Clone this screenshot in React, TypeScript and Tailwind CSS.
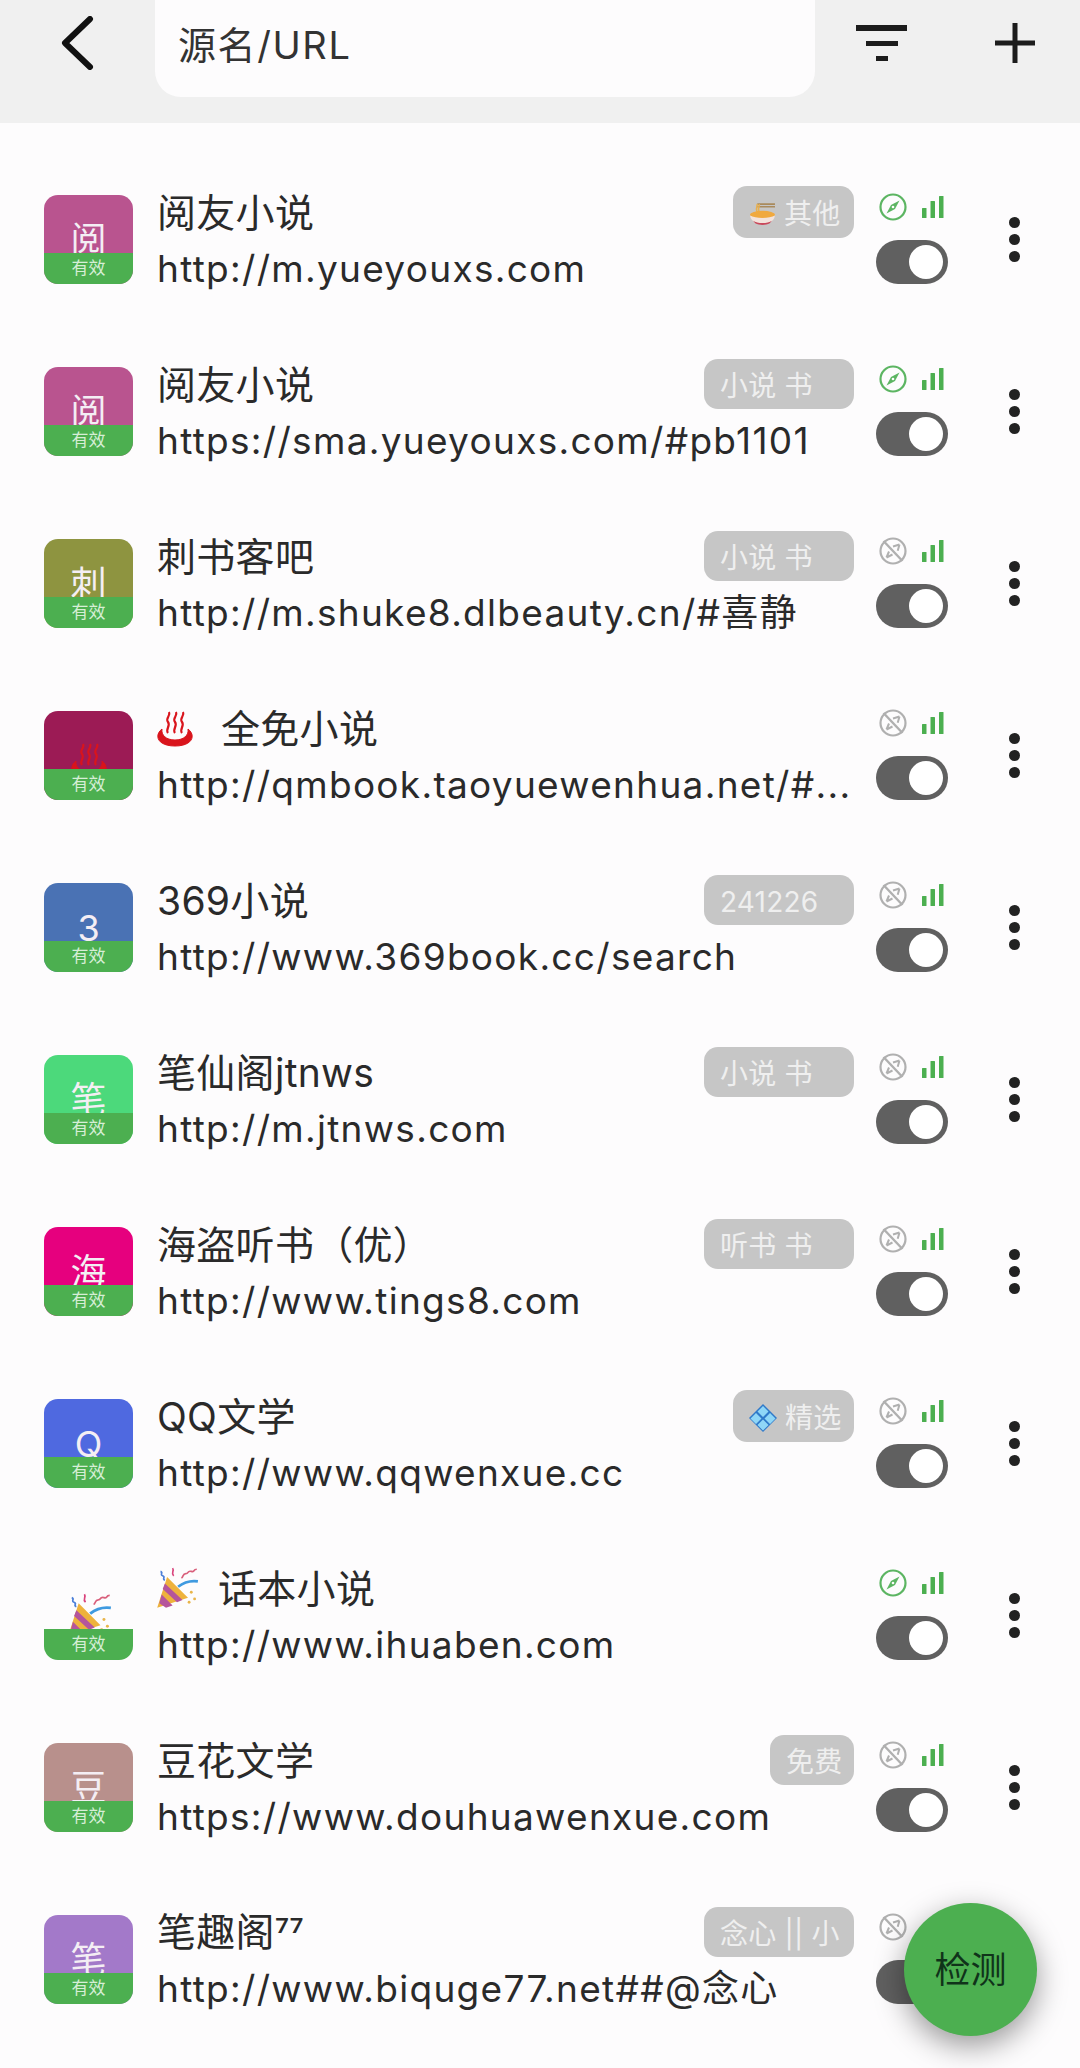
import React from 'react';

type Source = {
  tile: string;
  letter: React.ReactNode;
  title: React.ReactNode;
  url: string;
  badge?: React.ReactNode;
  badgeWidth?: string;
  found: boolean;
};

function Noodles({ size = 27 }: { size?: number }) {
  return (
    <svg width={size} height={size} viewBox="0 0 26 26">
      <path d="M8 3h17M8 5.500h17" stroke="#a98a5c" strokeWidth="1.500" />
      <path d="M8 3c-1 3-1 6 0 9M10 3c-1 3-1 6 0 9" stroke="#e9b04e" strokeWidth="1.500" fill="none" />
      <ellipse cx="13" cy="13.500" rx="12" ry="4" fill="#f0a93f" />
      <path d="M1 14c1 6 6 8 12 8s11-2 12-8c-5 3-19 3-24 0z" fill="#f3e3dc" />
      <path d="M4 19c4 3 14 3 18 0l-2 2.500c-4 2-10 2-14 0z" fill="#c9485b" />
    </svg>
  );
}

function Springs({ className = '' }: { className?: string }) {
  return (
    <svg className={className} width="36" height="36" viewBox="0 0 36 36" fill="none" stroke="#d9141c">
      <path d="M11 22c-3-4 3-7 0-11s3-6 1-10M18 22c-3-4 3-7 0-11s3-6 1-10M25 22c-3-4 3-7 0-11s3-6 1-10" strokeWidth="2.200" />
      <path d="M5 18c-8 6-5 17 13 17s21-11 13-17c1 6-4 11-13 11S4 24 5 18z" fill="#d9141c" strokeWidth="1" />
    </svg>
  );
}

function Popper({ size = 44 }: { size?: number }) {
  return (
    <svg width={size} height={size} viewBox="0 0 40 40" fill="none">
      <path d="M2 37l9-28 19 19z" fill="#eeb23c" />
      <path d="M6 25l10 10-6 2-6-4zM9 15l16 15-5 2L7 20z" fill="#b5559c" />
      <path d="M5 4c3 1-1 3 2 4s-1 3 2 4" stroke="#4c7fd8" strokeWidth="1.500" />
      <path d="M16 1c2 3-2 4 1 7" stroke="#d9437c" strokeWidth="1.500" />
      <path d="M24 10c2-1 1-4 4-4s1-3 5-2 1-2 5-2" stroke="#d9607c" strokeWidth="1.500" />
      <path d="M21 18c5-4 11-6 18-5" stroke="#3f9ae0" strokeWidth="2.500" />
      <circle cx="33" cy="23" r="1.300" fill="#e9b54a" />
      <circle cx="36" cy="29" r="1.300" fill="#e9b54a" />
      <circle cx="31" cy="32" r="1.300" fill="#e9b54a" />
    </svg>
  );
}

function Diamond({ size = 28 }: { size?: number }) {
  return (
    <svg width={size} height={size} viewBox="0 0 28 28">
      <path d="M14 0l14 14-14 14L0 14z" fill="#2f79c9" />
      <path d="M14 2l5.500 5.500L14 13 8.500 7.500zM7 9l5.500 5.500L7 20l-5.500-5.500zM21 9l5.500 5.500L21 20l-5.500-5.500zM14 15.500l5.500 5.500-5.500 5.500L8.500 21z" fill="#8fd6f7" />
    </svg>
  );
}

function Compass({ on }: { on: boolean }) {
  const color = on ? '#5cb562' : '#b0b0b0';
  return (
    <svg width="28" height="28" viewBox="0 0 28 28" fill="none">
      <circle cx="14" cy="14" r="12.500" stroke={color} strokeWidth="2.200" />
      {on ? (
        <>
          <path d="M20.500 7.500l-4.500 8.500-8.500 4.500 4.500-8.500z" fill={color} />
          <circle cx="14" cy="14" r="1.300" fill="#fdfcfd" />
        </>
      ) : (
        <>
          <path d="M20.500 7.500l-1.800 6.200M14 9.500l6.500-2" stroke={color} strokeWidth="2" />
          <path d="M7.500 20.500l6-3M7.500 20.500l2.500-6" stroke={color} strokeWidth="2" />
          <path d="M4.500 4l19 20" stroke={color} strokeWidth="2.400" />
        </>
      )}
    </svg>
  );
}

function Signal() {
  return (
    <svg width="22" height="22" viewBox="0 0 22 22" fill="#4caf50">
      <rect x="0" y="12" width="4.500" height="10" rx="0.500" />
      <rect x="8.500" y="5" width="4.500" height="17" rx="0.500" />
      <rect x="17" y="0" width="4.500" height="22" rx="0.500" />
    </svg>
  );
}

const sources: Source[] = [
  { tile: 'bg-[#b9548f]', letter: '阅', title: '阅友小说', url: 'http://m.yueyouxs.com', found: true, badgeWidth: 'w-[121px] h-[52px]', badge: <><Noodles /><span>其他</span></> },
  { tile: 'bg-[#b9548f]', letter: '阅', title: '阅友小说', url: 'https://sma.yueyouxs.com/#pb1101', found: true, badgeWidth: 'w-[150px] h-[50px]', badge: '小说 书' },
  { tile: 'bg-[#8e9440]', letter: '刺', title: '刺书客吧', url: 'http://m.shuke8.dlbeauty.cn/#喜静', found: false, badgeWidth: 'w-[150px] h-[50px]', badge: '小说 书' },
  { tile: 'bg-[#9c1b55]', letter: <Springs className="mt-[10px]" />, title: <span className="flex items-center gap-[28px]"><Springs /><span>全免小说</span></span>, url: 'http://qmbook.taoyuewenhua.net/#...', found: false },
  { tile: 'bg-[#4a72b4]', letter: '3', title: '369小说', url: 'http://www.369book.cc/search', found: false, badgeWidth: 'w-[150px] h-[50px]', badge: '241226' },
  { tile: 'bg-[#4cd97b]', letter: '笔', title: '笔仙阁jtnws', url: 'http://m.jtnws.com', found: false, badgeWidth: 'w-[150px] h-[50px]', badge: '小说 书' },
  { tile: 'bg-[#e6007e]', letter: '海', title: '海盗听书（优）', url: 'http://www.tings8.com', found: false, badgeWidth: 'w-[150px] h-[50px]', badge: '听书 书' },
  { tile: 'bg-[#4f69e0]', letter: 'Q', title: 'QQ文学', url: 'http://www.qqwenxue.cc', found: false, badgeWidth: 'w-[121px] h-[52px]', badge: <><Diamond /><span>精选</span></> },
  { tile: 'bg-transparent', letter: <Popper size={46} />, title: <span className="-ml-[2px] flex items-center gap-[19px]"><Popper /><span>话本小说</span></span>, url: 'http://www.ihuaben.com', found: true },
  { tile: 'bg-[#b8908c]', letter: '豆', title: '豆花文学', url: 'https://www.douhuawenxue.com', found: false, badgeWidth: 'w-[84px] h-[50px]', badge: '免费' },
  { tile: 'bg-[#a379c9]', letter: '笔', title: <>笔趣阁<span className="font-['Roboto',sans-serif]">⁷⁷</span></>, url: 'http://www.biquge77.net##@念心', found: false, badgeWidth: 'w-[150px] h-[50px]', badge: '念心 || 小' },
];

function Row({ source }: { source: Source }) {
  return (
    <div className="flex h-[172px] shrink-0 pl-[44px]">
      <div className={`relative mt-[41px] flex h-[89px] w-[89px] shrink-0 items-center justify-center overflow-hidden rounded-[14px] text-[36px] leading-none text-[#f4eef4] ${source.tile}`}>
        <span className="flex h-[46px] items-center">{source.letter}</span>
        <div className="absolute bottom-0 left-0 flex h-[31px] w-full items-center justify-center bg-[#4caf50] text-[17px] text-[#d6eed6]">有效</div>
      </div>

      <div className="ml-[24px] w-[697px] shrink-0 pt-[32px]">
        <div className="flex h-[52px] items-center justify-between">
          <div className="pt-[1px] text-[39px] leading-none tracking-[0.3px] text-[#2a2a2a]">{source.title}</div>
          {source.badge && (
            <div className={`flex items-center gap-[8px] rounded-[14px] bg-[#c6c6c6] pl-[16px] pt-[4px] text-[28px] tracking-[0.2px] whitespace-nowrap text-[#efefef] ${source.badgeWidth}`}>
              {source.badge}
            </div>
          )}
        </div>
        <div className="mt-[8px] flex h-[44px] items-center font-['Inter','Noto_Sans_CJK_SC',sans-serif] text-[37px] leading-none tracking-[1.3px] whitespace-nowrap text-[#2a2a2a]">
          {source.url}
        </div>
      </div>

      <div className="ml-[22px] flex w-[72px] shrink-0 flex-col pt-[39px]">
        <div className="flex h-[28px] items-center justify-between pl-[3px] pr-[4px]">
          <Compass on={source.found} />
          <Signal />
        </div>
        <div className="mt-[19px] flex h-[44px] w-[72px] items-center justify-end rounded-full bg-[#606060] pr-[5px]">
          <div className="h-[34px] w-[34px] rounded-full bg-white" />
        </div>
      </div>

      <div className="ml-[61px] flex w-[11px] shrink-0 flex-col gap-[6px] pt-[63px]">
        <div className="h-[11px] w-[11px] rounded-full bg-[#222222]" />
        <div className="h-[11px] w-[11px] rounded-full bg-[#222222]" />
        <div className="h-[11px] w-[11px] rounded-full bg-[#222222]" />
      </div>
    </div>
  );
}

export default function App() {
  return (
    <div className="relative h-[2068px] w-[1080px] overflow-hidden bg-[#fdfcfd] font-['Inter','Noto_Sans_CJK_SC',sans-serif]">
      {/* top bar */}
      <div className="flex h-[123px] items-start bg-[#f0f0f0]">
        <div className="flex h-[86px] w-[155px] shrink-0 items-center pl-[60px]">
          <svg width="34" height="54" viewBox="0 0 34 54" fill="none" stroke="#111111" strokeWidth="6" strokeLinecap="round" strokeLinejoin="round">
            <path d="M30 3L5 27l25 24" />
          </svg>
        </div>
        <div className="flex h-[97px] w-[660px] shrink-0 items-center rounded-b-[26px] bg-[#fdfcfd] pb-[7px] pl-[23px] text-[38px] tracking-[1.6px] text-[#333333]">
          源名/URL
        </div>
        <div className="ml-[41px] flex h-[86px] w-[51px] shrink-0 flex-col items-center justify-center gap-[10px]">
          <div className="h-[6px] w-[51px] bg-[#1c1c1c]" />
          <div className="h-[5px] w-[32px] bg-[#1c1c1c]" />
          <div className="h-[5px] w-[12px] bg-[#1c1c1c]" />
        </div>
        <div className="ml-[88px] flex h-[86px] items-center">
          <svg width="40" height="40" viewBox="0 0 40 40" stroke="#1c1c1c" strokeWidth="5">
            <path d="M20 0v40M0 20h40" />
          </svg>
        </div>
      </div>

      {/* sources */}
      <div className="flex flex-col pt-[31px]">
        {sources.map((source, i) => (
          <Row key={i} source={source} />
        ))}
      </div>

      <button className="absolute left-[904px] top-[1903px] flex h-[133px] w-[133px] items-center justify-center rounded-full bg-[#4caf50] text-[36px] text-[#10331a] shadow-[0_10px_30px_rgba(0,0,0,0.4)]">
        检测
      </button>
    </div>
  );
}
